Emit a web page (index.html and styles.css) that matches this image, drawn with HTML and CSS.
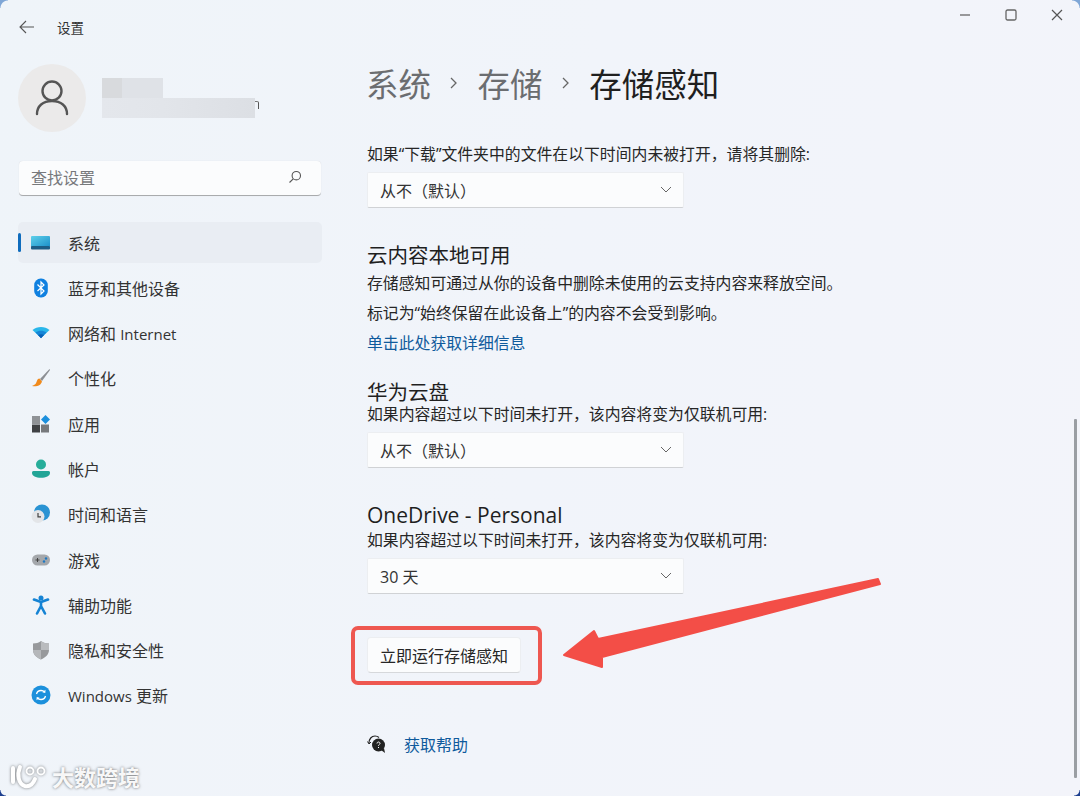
FILE: index.html
```html
<!DOCTYPE html>
<html lang="zh-CN">
<head>
  <meta charset="UTF-8">
  <title>设置</title>
  <link rel="stylesheet" href="styles.css">
</head>
<body>
  <div class="window">
    <!-- Title bar -->
    <header class="titlebar">
      <svg class="back" width="16" height="14" viewBox="0 0 16 14"><path d="M7 1 1 7l6 6M1 7h14" fill="none" stroke="#555" stroke-width="1.1"/></svg>
      <span class="app-name">设置</span>
      <div class="controls">
        <svg width="12" height="12" viewBox="0 0 12 12"><path d="M1 6h10" stroke="#666" stroke-width="1.3"/></svg>
        <svg width="12" height="12" viewBox="0 0 12 12"><rect x="1" y="1" width="10" height="10" rx="1.5" fill="none" stroke="#666" stroke-width="1.3"/></svg>
        <svg width="12" height="12" viewBox="0 0 12 12"><path d="m1 1 10 10M11 1 1 11" stroke="#555" stroke-width="1.2"/></svg>
      </div>
    </header>

    <div class="layout">
      <!-- Sidebar -->
      <aside class="sidebar">
        <div class="profile">
          <div class="avatar">
            <svg width="34" height="36" viewBox="0 0 34 36"><circle cx="17" cy="11" r="9.5" fill="none" stroke="#555" stroke-width="2.4"/><path d="M2 34c0-8 6-13 15-13s15 5 15 13" fill="none" stroke="#555" stroke-width="2.4" stroke-linecap="round"/></svg>
          </div>
          <div class="blur-name">
            <div class="blur-top"><i></i><i></i></div>
            <div class="blur-bottom"></div>
          </div>
        </div>

        <div class="search">
          <span>查找设置</span>
          <svg width="14" height="14" viewBox="0 0 14 14"><circle cx="8.3" cy="5.7" r="4.2" fill="none" stroke="#555" stroke-width="1.1"/><path d="M5.2 8.8 1.5 12.5" stroke="#555" stroke-width="1.1"/></svg>
        </div>

        <ul class="nav">
          <li class="active">
            <svg width="20" height="16" viewBox="0 0 20 16"><defs><linearGradient id="sys" x1="0" y1="0" x2="1" y2="1"><stop offset="0" stop-color="#5ed0ea"/><stop offset="1" stop-color="#1b8fc9"/></linearGradient></defs><rect y="1" width="19" height="11" rx="1" fill="url(#sys)"/><rect y="11" width="19" height="3.5" rx="1" fill="#1c5d86"/></svg>
            <span>系统</span>
          </li>
          <li>
            <svg width="20" height="20" viewBox="0 0 20 20"><rect x="3.2" y="0.5" width="13.6" height="19" rx="6.5" fill="#0f80e0"/><path d="m6.5 6.500 6.500 6.500-3 3V4l3 3-6.500 6" fill="none" stroke="#fff" stroke-width="1.2"/></svg>
            <span>蓝牙和其他设备</span>
          </li>
          <li>
            <svg width="20" height="16" viewBox="0 0 20 16"><path d="M1.5 5C6 1 14 1 18.500 5L10 13z" fill="#29b6ea"/><path d="M4.500 7.500c3.200-2.300 7.800-2.300 11 0L10 13z" fill="#1685d6"/><path d="M7 10c1.800-1 4.200-1 6 0l-3 3.200z" fill="#0a5fb5"/></svg>
            <span>网络和 <span class="latin">Internet</span></span>
          </li>
          <li>
            <svg width="20" height="20" viewBox="0 0 20 20"><path d="M18.500 1 9 11l2 2L19 2z" fill="#8c8f94"/><path d="M8.500 10.500c-3 .5-2.500 4-4 5.500-.8.800-2 1.500-3.500 2 3.500.8 8.500.5 10-4.500z" fill="#f08a1c"/></svg>
            <span>个性化</span>
          </li>
          <li>
            <svg width="20" height="20" viewBox="0 0 20 20"><rect x="1" y="2" width="8" height="8" fill="#8f9296"/><rect x="1" y="10.500" width="8" height="8" fill="#3f4144"/><rect x="10" y="10.500" width="8" height="8" fill="#77797c"/><path d="m14.500 1 4.500 4.500-4.500 4.500L10 5.500z" fill="#1c8fdc"/></svg>
            <span>应用</span>
          </li>
          <li>
            <svg width="20" height="20" viewBox="0 0 20 20"><circle cx="10" cy="5.500" r="5" fill="#27ad9a"/><path d="M2.500 12h15c1 0 1.500.8 1.500 1.800 0 3.200-4 5-9 5s-9-1.800-9-5c0-1 .5-1.800 1.500-1.800z" fill="#22a597"/></svg>
            <span>帐户</span>
          </li>
          <li>
            <svg width="20" height="20" viewBox="0 0 20 20"><circle cx="11" cy="8.500" r="8" fill="#2a93d3"/><circle cx="7" cy="12.500" r="6.500" fill="#e3e5e8"/><path d="M7 9v3.800h3" fill="none" stroke="#444" stroke-width="1.2"/></svg>
            <span>时间和语言</span>
          </li>
          <li>
            <svg width="20" height="14" viewBox="0 0 20 14"><rect x="1" y="1.500" width="18" height="11" rx="5.500" fill="#a4a7ab"/><path d="M4.500 7h4M6.500 5v4" stroke="#444" stroke-width="1"/><circle cx="13" cy="8.500" r="1.200" fill="#1c78c4"/><circle cx="15" cy="5.500" r="1.200" fill="#1c78c4"/></svg>
            <span>游戏</span>
          </li>
          <li>
            <svg width="20" height="20" viewBox="0 0 20 20"><circle cx="10" cy="3" r="2.500" fill="#1583d4"/><path d="M3 4.500 10 7l7-2.500M10 7v4l-4 7.500M10 11l4 7.500" fill="none" stroke="#1583d4" stroke-width="2.600" stroke-linecap="round" stroke-linejoin="round"/></svg>
            <span>辅助功能</span>
          </li>
          <li>
            <svg width="20" height="20" viewBox="0 0 20 20"><path d="M10 1c2.500 1.800 5 2.500 8 2.500V10c0 4.500-3.500 7.500-8 9.500C5.500 17.500 2 14.500 2 10V3.500C5 3.500 7.500 2.800 10 1z" fill="#97999c"/><path d="M10 1c2.500 1.800 5 2.500 8 2.500V10H10z" fill="#b9bbbe"/><path d="M10 10H2c0 4.500 3.500 7.500 8 9.500z" fill="#b5b7ba"/></svg>
            <span>隐私和安全性</span>
          </li>
          <li>
            <svg width="20" height="20" viewBox="0 0 20 20"><circle cx="10" cy="10" r="9.500" fill="#1c90dc"/><path d="M5.500 9c.5-2.200 2.300-3.500 4.500-3.500 1.500 0 2.800.6 3.700 1.700M14.500 11c-.5 2.200-2.300 3.500-4.500 3.500-1.500 0-2.800-.6-3.700-1.700" fill="none" stroke="#fff" stroke-width="1.300"/><path d="m14.500 4.800-.2 3.200-3-.7zM5.500 15.200l.2-3.200 3 .7z" fill="#fff"/></svg>
            <span><span class="latin">Windows</span> 更新</span>
          </li>
        </ul>
      </aside>

      <!-- Main content -->
      <main class="content">
        <h1 class="crumbs">
          <span class="dim">系统</span>
          <svg width="10" height="14" viewBox="0 0 10 14"><path d="m2 2 5 5-5 5" fill="none" stroke="#666" stroke-width="1.300"/></svg>
          <span class="dim">存储</span>
          <svg width="10" height="14" viewBox="0 0 10 14"><path d="m2 2 5 5-5 5" fill="none" stroke="#666" stroke-width="1.300"/></svg>
          <span>存储感知</span>
        </h1>

        <p class="label first">如果“下载”文件夹中的文件在以下时间内未被打开，请将其删除:</p>
        <div class="select"><span>从不（默认）</span><svg width="12" height="8" viewBox="0 0 12 8"><path d="m1 1 5 5 5-5" fill="none" stroke="#666"/></svg></div>

        <h2 class="cloud-title">云内容本地可用</h2>
        <p class="desc">存储感知可通过从你的设备中删除未使用的云支持内容来释放空间。</p>
        <p class="desc">标记为“始终保留在此设备上”的内容不会受到影响。</p>
        <a class="link desc" href="#">单击此处获取详细信息</a>

        <h2 class="huawei">华为云盘</h2>
        <p class="label">如果内容超过以下时间未打开，该内容将变为仅联机可用:</p>
        <div class="select"><span>从不（默认）</span><svg width="12" height="8" viewBox="0 0 12 8"><path d="m1 1 5 5 5-5" fill="none" stroke="#666"/></svg></div>

        <h2 class="onedrive">OneDrive - Personal</h2>
        <p class="label">如果内容超过以下时间未打开，该内容将变为仅联机可用:</p>
        <div class="select"><span>30 天</span><svg width="12" height="8" viewBox="0 0 12 8"><path d="m1 1 5 5 5-5" fill="none" stroke="#666"/></svg></div>

        <button class="run-btn">立即运行存储感知</button>

        <div class="help">
          <svg width="20" height="20" viewBox="0 0 20 20"><circle cx="11.500" cy="11" r="6.500" fill="#222"/><path d="m14 16 4 3-1-5z" fill="#222"/><path d="M2 9c0-4 2.500-7 6-7 1.500 0 3 .6 4 1.500" fill="none" stroke="#222" stroke-width="1.200"/><path d="M0.500 7.500 2 10l2-2" fill="none" stroke="#222" stroke-width="1"/><path d="M10 9.500c0-2 3-2 3 0 0 1-1.500 1-1.500 2.200M11.500 13v1" fill="none" stroke="#fff" stroke-width="1"/></svg>
          <a class="link" href="#">获取帮助</a>
        </div>
      </main>
    </div>
  </div>

  <!-- Overlays: annotations, wallpaper corners, scrollbar, watermark -->
  <div class="corner corner-tl"></div>
  <div class="corner corner-tr"></div>
  <div class="corner corner-bl"></div>
  <div class="corner corner-br"></div>
  <div class="scrollbar"></div>
  <div class="red-box"></div>
  <svg class="arrow" width="340" height="110" viewBox="0 0 340 110"><path d="M318 3 320 8 42 81 42 91 4 79 34 55 38 63z" fill="#f34e47" stroke="#f34e47" stroke-width="2" stroke-linejoin="round"/></svg>
  <div class="watermark">
    <svg width="38" height="26" viewBox="0 0 38 26"><path d="M3 4v14M10 3c-3 7-2 17 5 19 5 1 8-2 10-7" fill="none" stroke="#fff" stroke-width="4" stroke-linecap="round"/><circle cx="20" cy="7" r="3.500" fill="none" stroke="#fff" stroke-width="1.800"/><circle cx="31" cy="7" r="3.500" fill="none" stroke="#fff" stroke-width="1.800"/></svg>
    <span>大数跨境</span>
  </div>
</body>
</html>
```

FILE: styles.css
```css
/* Reset */
* {
  margin: 0;
  padding: 0;
  box-sizing: border-box;
}

body {
  width: 1080px;
  height: 796px;
  overflow: hidden;
  position: relative;
  font-family: "Open Sans", "Noto Sans CJK SC", sans-serif;
  color: #262626;
  background: #1d3f8f;
}

.window {
  height: 796px;
  background: linear-gradient(100deg, #eff4f9 0%, #f1f4fa 50%, #f3f4fa 100%);
}

/* Title bar */
.titlebar {
  height: 56px;
  display: flex;
  align-items: center;
  padding-left: 19px;
}

.back {
  margin-right: 22px;
  margin-top: -2px;
}

.app-name {
  font-size: 13.5px;
  color: #333;
  margin-top: -3px;
}

.controls {
  margin-left: auto;
  display: flex;
  gap: 34px;
  padding-right: 17px;
  margin-top: -26px;
}

/* Sidebar + main */
.layout {
  display: flex;
}

.sidebar {
  width: 340px;
  flex: none;
  padding: 8px 18px 0;
}

.profile {
  display: flex;
  align-items: center;
  gap: 16px;
}

.avatar {
  width: 68px;
  height: 68px;
  border-radius: 50%;
  background: #ebeaea;
  display: flex;
  align-items: center;
  justify-content: center;
}

.blur-name {
  width: 153px;
}

.blur-top {
  display: flex;
  height: 20px;
}

.blur-top i {
  display: block;
  width: 20px;
  background: #d8dadd;
}

.blur-top i + i {
  width: 41px;
  background: #dfe2e7;
}

.blur-bottom {
  position: relative;
  height: 20px;
  background: linear-gradient(90deg, #e4e7ec 0%, #e2e5ea 40%, #dcdfe4 100%);
}

/* last letter of the name sticks out of the blur */
.blur-bottom::after {
  content: "";
  position: absolute;
  left: 153px;
  top: 3px;
  width: 3px;
  height: 7px;
  border-top: 1px solid #777;
  border-right: 1.5px solid #555;
  border-top-right-radius: 2px;
}

.search {
  height: 35px;
  margin: 29px 1px 26px;
  padding: 0 19px 2px 12px;
  display: flex;
  align-items: center;
  justify-content: space-between;
  background: #fbfcfd;
  border-radius: 4px;
  border-bottom: 1px solid #a9abad;
  box-shadow: 0 0 1px rgba(0, 0, 0, 0.15);
  font-size: 16px;
  color: #77797c;
}

.nav {
  list-style: none;
  display: flex;
  flex-direction: column;
  gap: 4.3px;
}

.nav li {
  position: relative;
  height: 41px;
  display: flex;
  align-items: center;
  gap: 17px;
  padding-left: 13px;
  font-size: 16px;
  color: #333;
  border-radius: 5px;
}

.nav svg {
  width: 20px;
  flex: none;
}

.nav .latin {
  font-size: 15px;
}

.nav .active {
  background: #e9edf3;
}

.nav .active::before {
  content: "";
  position: absolute;
  left: 0;
  top: 11px;
  width: 3px;
  height: 19px;
  border-radius: 2px;
  background: #0f6cbd;
}

.content {
  flex: 1;
  padding: 5px 0 0 26px;
}

.crumbs {
  display: flex;
  align-items: center;
  height: 44px;
  font-size: 32.5px;
  font-weight: 400;
  color: #1f1f1f;
  gap: 18.3px;
}

.crumbs .dim {
  color: #6b6d70;
}

.label,
.desc {
  font-size: 15.85px;
  line-height: 22px;
  color: #262626;
  margin-left: 1px;
}

.label {
  margin-bottom: 7px;
}

.label.first {
  margin-top: 38px;
}

.desc {
  margin-bottom: 8px;
}

h2 {
  font-size: 20.5px;
  font-weight: 400;
  line-height: 28px;
  color: #1f1f1f;
  margin-left: 1px;
}

.cloud-title {
  margin-top: 33px;
  margin-bottom: 3px;
}

.huawei {
  margin-top: 24px;
  margin-bottom: -3px;
}

.onedrive {
  margin-top: 33px;
  margin-bottom: 0;
  font-size: 21px;
}

.select {
  width: 317px;
  height: 36px;
  margin-left: 1px;
  padding: 0 11px 0 12px;
  display: flex;
  align-items: center;
  justify-content: space-between;
  background: #fbfcfd;
  border: 1px solid #eceef1;
  border-bottom-color: #d0d2d5;
  border-radius: 2px;
  font-size: 16px;
  color: #333;
}

.link {
  color: #0f5a9c;
  text-decoration: none;
  display: block;
}

.run-btn {
  display: block;
  width: 154px;
  height: 36px;
  margin: 43px 0 0 1px;
  background: #fbfcfd;
  border: 1px solid #eceef1;
  border-bottom-color: #d6d8db;
  border-radius: 4px;
  font: inherit;
  font-size: 16px;
  color: #262626;
}

.help {
  display: flex;
  align-items: center;
  gap: 17px;
  margin: 59px 0 0 1px;
  font-size: 16px;
}

/* Overlays */
.corner {
  position: absolute;
}

.corner-tl {
  left: 0;
  top: 0;
  background: radial-gradient(circle at 100% 100%, transparent 7px, #7fa6d6 8px);
  width: 8px;
  height: 8px;
}

.corner-tr {
  right: 0;
  top: 0;
  background: radial-gradient(circle at 0 100%, transparent 7px, #7fa6d6 8px);
  width: 8px;
  height: 8px;
}

.corner-bl {
  left: 0;
  bottom: 0;
  background: radial-gradient(circle at 100% 0, transparent 5px, #1d3f8f 6px);
  width: 6px;
  height: 6px;
}

.corner-br {
  right: 0;
  bottom: 0;
  background: radial-gradient(circle at 0 0, transparent 5px, #1d3f8f 6px);
  width: 6px;
  height: 6px;
}

.scrollbar {
  position: absolute;
  left: 1074px;
  top: 419px;
  width: 2.5px;
  height: 359px;
  background: #9a9ea3;
  border-radius: 1px;
}

.red-box {
  position: absolute;
  left: 351px;
  top: 626px;
  width: 191px;
  height: 59px;
  border: 4px solid #ee5750;
  border-radius: 7px;
}

.arrow {
  position: absolute;
  left: 560px;
  top: 576px;
}

.watermark {
  position: absolute;
  left: 10px;
  top: 762px;
  display: flex;
  align-items: center;
  gap: 4px;
  font-size: 22px;
  font-weight: 700;
  line-height: 30px;
  color: rgba(255, 255, 255, 0.95);
  text-shadow: 0 0 3px rgba(0, 0, 0, 0.55);
}

.watermark svg {
  filter: drop-shadow(0 0 1.5px rgba(0, 0, 0, 0.5));
}
```
